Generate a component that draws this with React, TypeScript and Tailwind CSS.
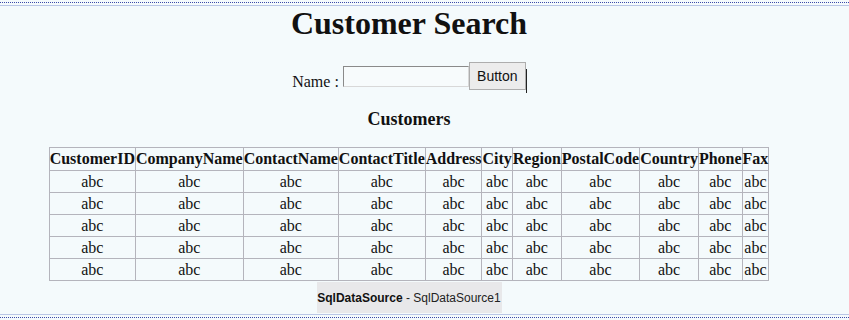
import React from "react";

const cols = ["CustomerID","CompanyName","ContactName","ContactTitle","Address","City","Region","PostalCode","Country","Phone","Fax"];

export default function App() {
  return (
    <div className="relative w-[849px] h-[320px] overflow-hidden bg-[#f4fafc] text-[#111]" style={{ fontFamily: '"Liberation Serif", serif' }}>
      <div className="absolute left-0 right-0 top-[2px] h-px border-t border-dotted border-[#3a4aa8]" />
      <div className="absolute left-0 right-0 top-[5px] h-px bg-[#b9c6e6]" />
      <div className="absolute left-0 right-0 top-[314px] h-px bg-[#b9c6e6]" />
      <div className="absolute left-0 right-0 top-[317px] h-px border-t border-dotted border-[#3a4aa8]" />
      <div className="w-[818px] flex flex-col items-center">
        <h1 className="mt-[5px] text-[32px] leading-[37px] font-bold">Customer Search</h1>
        <div className="mt-[18px] flex items-end h-[30px]">
          <span className="text-[16px] leading-[18px] mb-[-1px] mr-[4px]">Name :</span>
          <div className="w-[126px] h-[21px] mb-[3px] border border-[#8a8a8a] border-r-[#d8d8d8] border-b-[#d8d8d8] bg-[#f7fbfc]" />
          <div className="relative h-[28px] w-[57px] flex items-center justify-center bg-[#ececec] border border-[#adadad] text-[14px] text-[#111]" style={{ fontFamily: '"Liberation Sans", sans-serif' }}>
            Button
            <div className="absolute right-[-2px] top-[6px] h-[24px] w-px bg-[#222]" />
          </div>
        </div>
        <h3 className="mt-[19px] text-[18px] leading-[20px] font-bold">Customers</h3>
        <table className="mt-[18px] border-collapse border border-[#b4b4bc] text-[16px]">
          <thead>
            <tr>
              {cols.map((c) => (
                <th key={c} className="border border-[#b4b4bc] p-0 h-[23px] leading-[18px] font-bold">{c}</th>
              ))}
            </tr>
          </thead>
          <tbody>
            {[0,1,2,3,4].map((r) => (
              <tr key={r}>
                {cols.map((c) => (
                  <td key={c} className="border border-[#b4b4bc] p-0 h-[22px] leading-[18px] text-center">abc</td>
                ))}
              </tr>
            ))}
          </tbody>
        </table>
        <div className="mt-[1px] w-[185px] h-[31px] flex items-center justify-center whitespace-nowrap bg-[#e8e8ea] text-[12px]" style={{ fontFamily: '"Liberation Sans", sans-serif' }}>
          <span className="font-bold">SqlDataSource</span>
          <span className="text-[#222]">&nbsp;- SqlDataSource1</span>
        </div>
      </div>
    </div>
  );
}
